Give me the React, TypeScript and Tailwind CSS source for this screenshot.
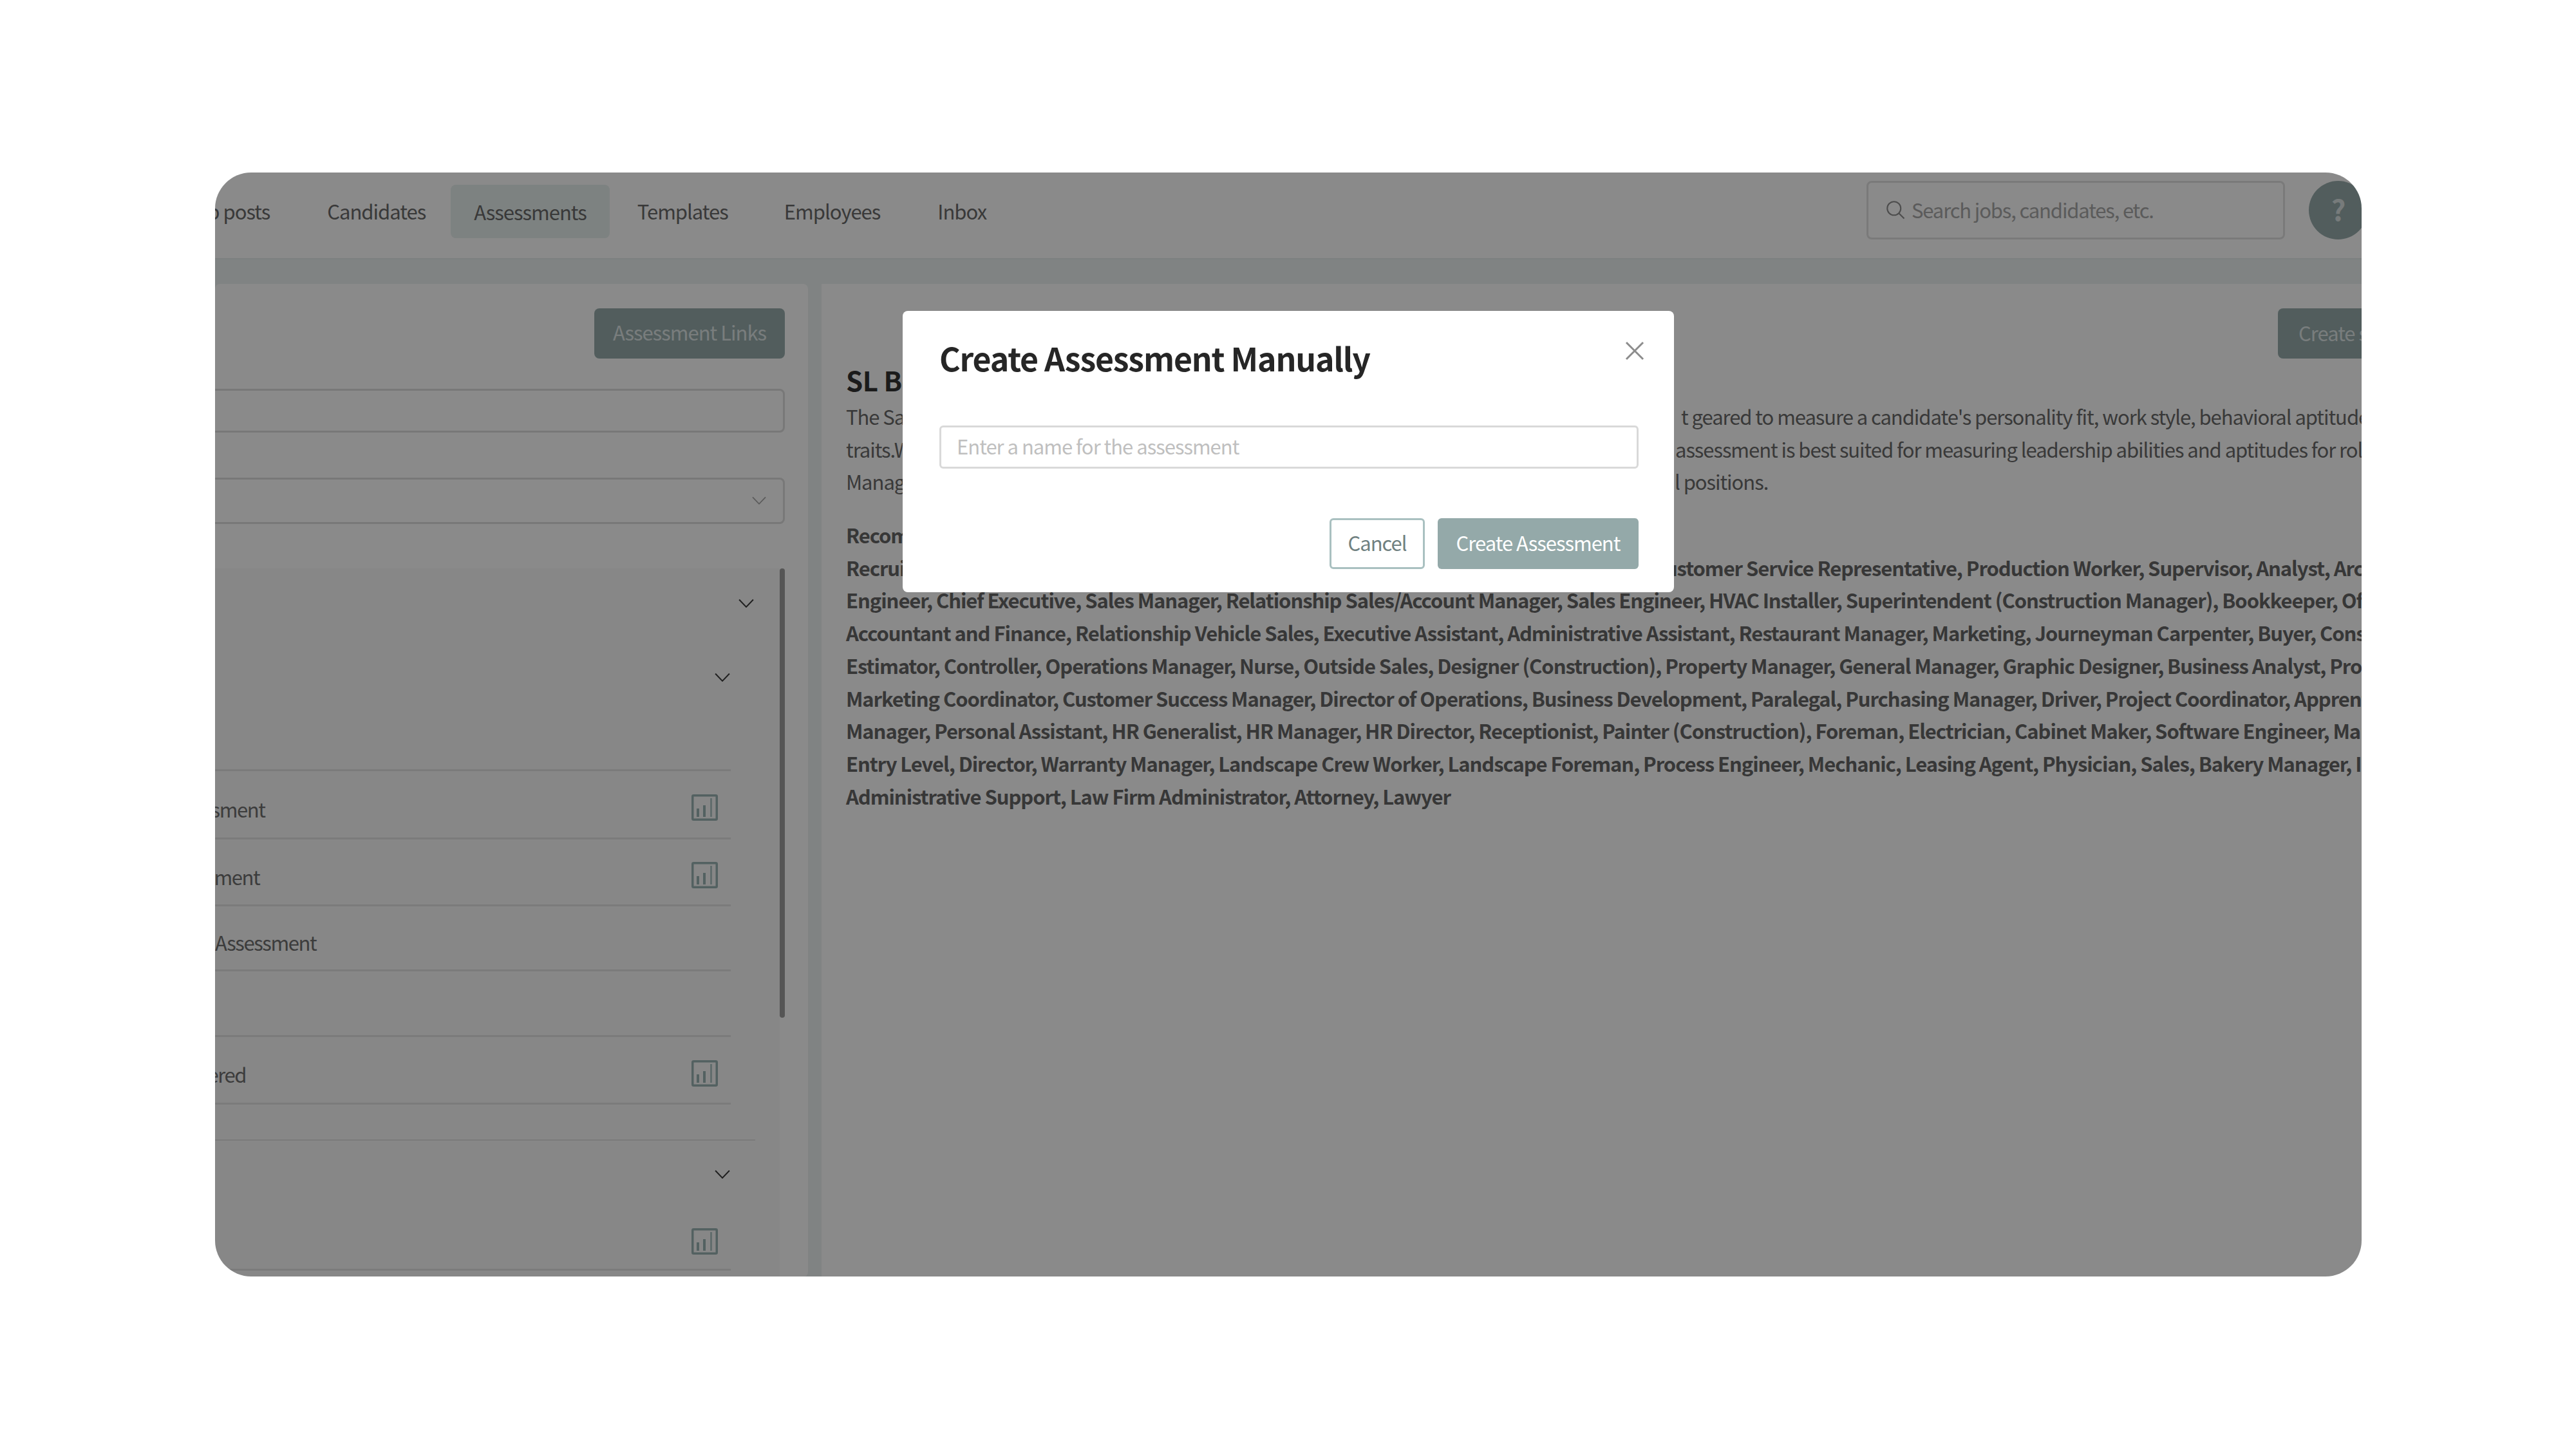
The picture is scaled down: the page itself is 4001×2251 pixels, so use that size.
import React from "react";

const lh = "h-[50.7px] leading-[50.7px] whitespace-nowrap";

function Chart() {
  return (
    <svg width="41" height="41" viewBox="0 0 41 41" fill="none" className="shrink-0">
      <rect x="1.75" y="1.75" width="37.5" height="37.5" rx="1.5" stroke="#9ab4b4" strokeWidth="3.5" />
      <rect x="8" y="22" width="4" height="13" fill="#9ab4b4" />
      <rect x="18" y="17" width="4" height="18" fill="#9ab4b4" />
      <rect x="29" y="6" width="3" height="29" fill="#b4caca" />
    </svg>
  );
}

function Chevron({ color = "#3a3a3a", size = 24 }: { color?: string; size?: number }) {
  return (
    <svg width={size} height={size * 0.62} viewBox="0 0 24 15" fill="none" className="shrink-0">
      <path d="M1 1.5 L12 13 L23 1.5" stroke={color} strokeWidth="2" />
    </svg>
  );
}

function Row({ text, offset, icon, h }: { text: string; offset: string; icon?: boolean; h: string }) {
  return (
    <div className={`flex items-center justify-between border-b-[3px] border-[#e4e4e4] pr-[20px] pt-[10px] overflow-hidden ${h}`}>
      <span className={`shrink-0 whitespace-nowrap tracking-[-1.4px] text-[#707070] mt-[5px] ${offset}`}>{text}</span>
      {icon && <Chart />}
    </div>
  );
}

export default function App() {
  return (
    <div className="w-[4001px] h-[2251px] bg-white pl-[334px] pt-[268px] text-[31px] tracking-[-1px] font-['Noto_Sans_CJK_SC','Noto_Sans',sans-serif]">
      <div className="relative w-[3334px] h-[1715px] rounded-[56px] overflow-hidden bg-[#edf3f2]">
        {/* nav */}
        <div className="h-[135px] bg-white border-b-[2px] border-[#e6eded] flex items-center pb-[12px]">
          <div className="flex items-center -ml-[82px] text-[#6a6a6a] whitespace-nowrap">
            <span className="px-[37px]">Job posts</span>
            <span className="px-[37px] ml-[15px]">Candidates</span>
            <span className="px-[36px] ml-[2px] h-[83px] leading-[83px] rounded-[8px] bg-[#e8f0ef]">Assessments</span>
            <span className="px-[37px] ml-[6px]">Templates</span>
            <span className="px-[37px] ml-[13px]">Employees</span>
            <span className="px-[37px] ml-[15px]">Inbox</span>
          </div>
          <div className="ml-auto flex items-center -mt-[5px]">
            <div className="w-[650px] h-[91px] border-[3px] border-[#e2e2e2] rounded-[8px] flex items-center pl-[24px]">
              <svg width="36" height="36" viewBox="0 0 24 24" fill="none" stroke="#8e8e8e" strokeWidth="1.4" className="shrink-0">
                <circle cx="10.5" cy="10.5" r="7" />
                <path d="M15.5 15.5 L21 21" />
              </svg>
              <span className="ml-[7px] tracking-[-1.15px] text-[#a8a8a8] whitespace-nowrap">Search jobs, candidates, etc.</span>
            </div>
            <div className="ml-[37px] -mr-[9px] w-[91px] h-[91px] rounded-full bg-[#98acac] flex items-center justify-center text-[44px] font-bold text-[#dce4e4] pb-[4px]">?</div>
          </div>
        </div>
        {/* main */}
        <div className="flex gap-[21px] pt-[38px]">
          <div className="w-[921px] h-[1543px] bg-white rounded-[8px] shrink-0 pr-[36px] pt-[38px] overflow-hidden">
            <div className="flex justify-end">
              <div className="w-[296px] h-[78px] rounded-[8px] bg-[#98acac] leading-[74px] text-center text-[#dfe7e7]">Assessment Links</div>
            </div>
            <div className="mt-[47px] h-[68px] border-[3px] border-[#dedede] rounded-[8px] -ml-[20px]" />
            <div className="mt-[70px] h-[72px] border-[3px] border-[#dedede] rounded-[8px] -ml-[20px] flex items-center justify-end pr-[26px]">
              <Chevron color="#a8a8a8" size={22} />
            </div>
            <div className="mt-[69px] flex h-[1100px]">
              <div className="w-[877px] bg-[#f9f9f9]">
                <div className="h-[108px] flex items-center justify-end pr-[40px]"><Chevron /></div>
                <div className="h-[122px] flex items-center justify-end pr-[77px]"><Chevron /></div>
                <div className="h-[85px] w-[801px] border-b-[3px] border-[#e4e4e4]" />
                <div className="w-[801px]">
                  <Row h="h-[106px]" offset="-ml-[226px]" text="Behavioral Assessment" icon />
                  <Row h="h-[104px]" offset="-ml-[163px]" text="Sales Assessment" icon />
                  <Row h="h-[101px]" offset="ml-0" text="Assessment" />
                  <Row h="h-[102px]" offset="ml-0" text="" />
                  <Row h="h-[105px]" offset="-ml-[83px]" text="Answered" icon />
                </div>
                <div className="h-[56px] w-[839px] border-b-[2px] border-[#e4e4e4]" />
                <div className="h-[104px] flex items-center justify-end pr-[77px]"><Chevron /></div>
                <div className="w-[801px]">
                  <Row h="h-[98px]" offset="ml-0" text="" icon />
                </div>
              </div>
              <div className="w-[8px] h-[698px] bg-[#9d9d9d] rounded-[4px]" />
            </div>
          </div>
          <div className="flex-1 bg-white pt-[38px] pl-[38px] overflow-hidden">
            <div className="flex justify-end">
              <div className="w-[300px] -mr-[170px] h-[78px] rounded-[8px] bg-[#98acac] leading-[76px] pl-[32px] text-[#dfe7e7] whitespace-nowrap">Create similar</div>
            </div>
            <div className="mt-[3px] h-[60px] leading-[60px] text-[42px] tracking-[-0.5px] font-bold text-[#333333] whitespace-nowrap">SL Behavioral</div>
            <div className="mt-[2px] text-[#6a6a6a] tracking-[-1.05px]">
              <div className={`${lh} flex`}>
                <span className="w-[1297px] shrink-0 overflow-hidden">The Sales Leadership assessment is a tes</span>
                <span>t geared to measure a candidate's personality fit, work style, behavioral aptitudes and</span>
              </div>
              <div className={`${lh} flex`}>
                <span className="w-[1288px] shrink-0 overflow-hidden">traits.While not a test of skill, this</span>
                <span>assessment is best suited for measuring leadership abilities and aptitudes for roles and</span>
              </div>
              <div className={`${lh} flex`}>
                <span className="w-[1287px] shrink-0 overflow-hidden">Managers, supervisors and leadership</span>
                <span>l positions.</span>
              </div>
            </div>
            <div className="mt-[32px] font-semibold tracking-[-1.07px] text-[#666666]">
              <div className={lh}>Recommended for:</div>
              <div className={`${lh} flex`}>
                <span className="w-[1253px] shrink-0 overflow-hidden">Recruiter, Manager, Team Lead, Assistant</span>
                <span>Customer Service Representative, Production Worker, Supervisor, Analyst, Architect,</span>
              </div>
              <div className={lh}>Engineer, Chief Executive, Sales Manager, Relationship Sales/Account Manager, Sales Engineer, HVAC Installer, Superintendent (Construction Manager), Bookkeeper, Office Manager,</div>
              <div className={lh}>Accountant and Finance, Relationship Vehicle Sales, Executive Assistant, Administrative Assistant, Restaurant Manager, Marketing, Journeyman Carpenter, Buyer, Construction,</div>
              <div className={lh}>Estimator, Controller, Operations Manager, Nurse, Outside Sales, Designer (Construction), Property Manager, General Manager, Graphic Designer, Business Analyst, Product</div>
              <div className={lh}>Marketing Coordinator, Customer Success Manager, Director of Operations, Business Development, Paralegal, Purchasing Manager, Driver, Project Coordinator, Apprentice,</div>
              <div className={lh}>Manager, Personal Assistant, HR Generalist, HR Manager, HR Director, Receptionist, Painter (Construction), Foreman, Electrician, Cabinet Maker, Software Engineer, Marketing</div>
              <div className={lh}>Entry Level, Director, Warranty Manager, Landscape Crew Worker, Landscape Foreman, Process Engineer, Mechanic, Leasing Agent, Physician, Sales, Bakery Manager, IT Manager,</div>
              <div className={lh}>Administrative Support, Law Firm Administrator, Attorney, Lawyer</div>
            </div>
          </div>
        </div>
        {/* overlay + modal */}
        <div className="absolute inset-0 bg-black/[0.46] flex justify-center pt-[215px]">
          <div className="w-[1198px] h-[437px] bg-white rounded-[8px] pl-[57px] pr-[55px] pt-[35px]">
            <div className="flex justify-between h-[74px]">
              <span className="text-[50px] tracking-[-1.2px] leading-[74px] font-semibold text-[#262626] whitespace-nowrap">Create Assessment Manually</span>
              <svg width="30" height="30" viewBox="0 0 30 30" fill="none" stroke="#8c8c8c" strokeWidth="3" className="-mr-[9px] mt-[12px]">
                <path d="M2 2 L28 28 M28 2 L2 28" />
              </svg>
            </div>
            <div className="mt-[69px] h-[67px] border-[3px] border-[#d9d9d9] rounded-[6px] flex items-center pl-[24px] pb-[2px] text-[#bfbfbf] whitespace-nowrap">Enter a name for the assessment</div>
            <div className="mt-[77px] flex justify-end gap-[20px]">
              <div className="w-[148px] h-[79px] border-[3px] border-[#a9c0c0] rounded-[6px] flex items-center justify-center pb-[2px] text-[#6f8080]">Cancel</div>
              <div className="w-[312px] h-[79px] bg-[#94a9a9] rounded-[6px] flex items-center justify-center pb-[2px] text-white whitespace-nowrap">Create Assessment</div>
            </div>
          </div>
        </div>
      </div>
    </div>
  );
}
